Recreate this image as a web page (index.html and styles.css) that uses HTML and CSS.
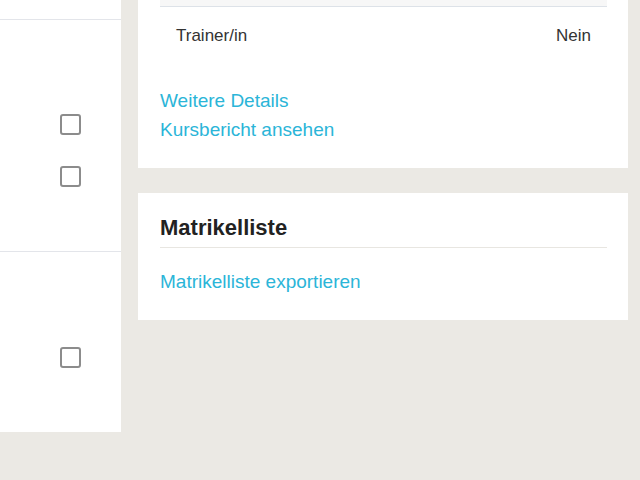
FILE: index.html
```html
<!DOCTYPE html>
<html lang="de">
<head>
    <meta charset="UTF-8">
    <meta name="viewport" content="width=device-width, initial-scale=1.0">
    <title>Kurs</title>
    <link rel="stylesheet" href="styles.css">
</head>
<body>
    <div class="page">
        <div class="auswahl">
            <div class="zeile leer"></div>
            <div class="zeile gruppe-eins">
                <input type="checkbox" class="box">
                <input type="checkbox" class="box">
            </div>
            <div class="zeile gruppe-zwei">
                <input type="checkbox" class="box">
            </div>
        </div>

        <div class="seite">
            <section class="karte">
                <table class="details">
                    <tr class="kopf"><th></th><th></th></tr>
                    <tr>
                        <td>Trainer/in</td>
                        <td class="wert">Nein</td>
                    </tr>
                </table>
                <div class="links">
                    <a href="#">Weitere Details</a>
                    <a href="#">Kursbericht ansehen</a>
                </div>
            </section>

            <section class="karte">
                <h2>Matrikelliste</h2>
                <div class="links">
                    <a href="#">Matrikelliste exportieren</a>
                </div>
            </section>
        </div>
    </div>
</body>
</html>
```

FILE: styles.css
```css
body{
    margin: 0;
    background-color: #ebe9e4;
    font-family: 'Liberation Sans', Arial, sans-serif;
    color: #333;
}
.page{
    display: flex;
    align-items: flex-start;
    gap: 17px;
}
.auswahl{
    width: 121px;
    background-color: white;
}
.zeile{
    box-sizing: border-box;
    padding-right: 40px;
    display: flex;
    flex-direction: column;
    align-items: flex-end;
    gap: 31px;
}
.leer{
    height: 20px;
    border-bottom: 1px solid #e3e5ea;
}
.gruppe-eins{
    height: 232px;
    padding-top: 94px;
    border-bottom: 1px solid #e3e5ea;
}
.gruppe-zwei{
    height: 180px;
    padding-top: 95px;
}
.box{
    appearance: none;
    margin: 0;
    width: 21px;
    height: 21px;
    box-sizing: border-box;
    border: 2px solid #8c8c8c;
    border-radius: 3px;
    background: white;
}
.seite{
    width: 490px;
    display: flex;
    flex-direction: column;
    gap: 25px;
}
.karte{
    background-color: white;
    padding: 0 21px 24px 22px;
}
.details{
    width: 100%;
    border-collapse: collapse;
    font-size: 17px;
    line-height: 20px;
}
.kopf th{
    height: 6px;
    padding: 0;
    background-color: #f7f7f7;
    border-bottom: 1px solid #dde2e8;
}
.details td{
    padding: 19px 16px 19px 16px;
}
.details .wert{
    text-align: right;
}
.links{
    display: flex;
    flex-direction: column;
    align-items: flex-start;
    margin-top: 21px;
    font-size: 19px;
    line-height: 29px;
}
.links a{
    color: #2bb5d8;
    text-decoration: none;
}
h2{
    margin: 0;
    padding: 22px 0 6px 0;
    font-size: 22px;
    line-height: 26px;
    font-weight: bold;
    color: #222;
    border-bottom: 1px solid #e8e6e1;
}
h2 + .links{
    margin-top: 19px;
}
```
